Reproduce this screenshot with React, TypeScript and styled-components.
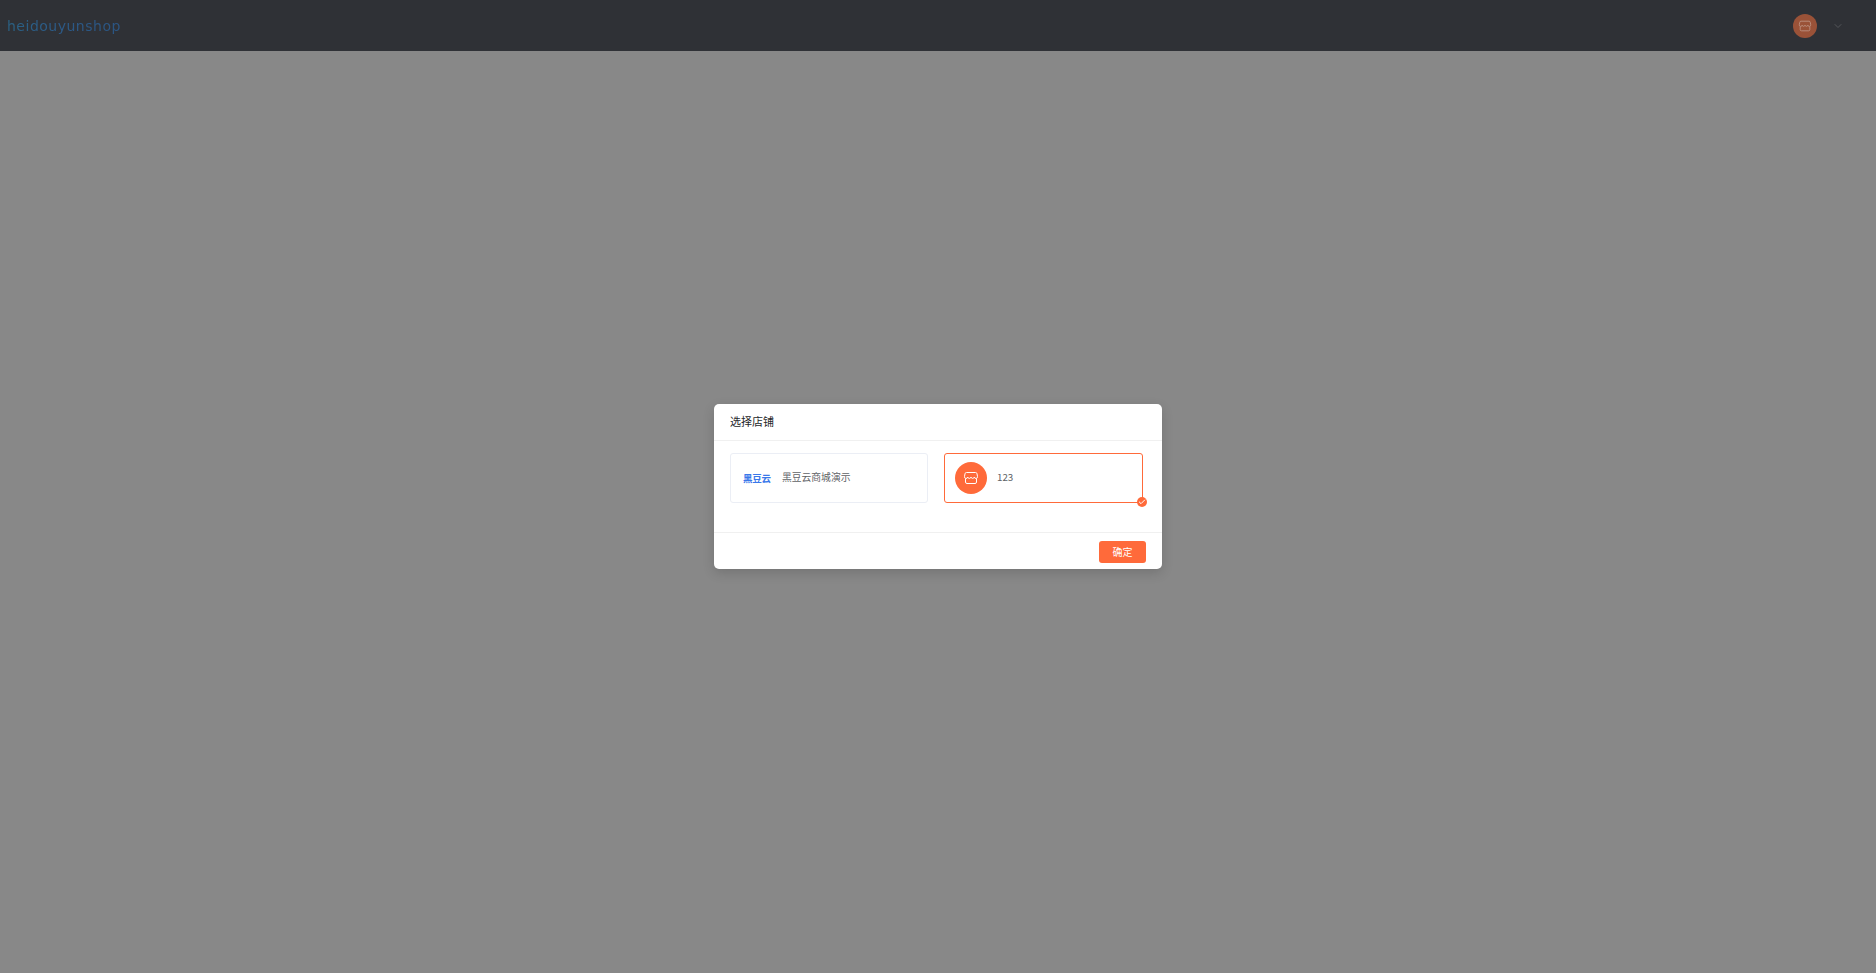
import React from 'react';
import styled, { createGlobalStyle } from 'styled-components';
import { Check, ChevronDown } from 'lucide-react';

const FONT = `"Noto Sans CJK SC", "Liberation Sans", sans-serif`;
const ORANGE = '#ff6a3a';

const GlobalStyle = createGlobalStyle`
  html, body {
    margin: 0;
    height: 100%;
    overflow: hidden;
    background: #888888;
    font-family: ${FONT};
  }
  #root {
    height: 100%;
  }
`;

const Page = styled.div`
  display: flex;
  flex-direction: column;
  height: 100%;
`;

const TopBar = styled.header`
  display: flex;
  align-items: center;
  justify-content: space-between;
  height: 51px;
  flex-shrink: 0;
  padding: 0 32px 0 7px;
  background: #2f3136;
`;

const Logo = styled.div`
  font-family: "DejaVu Sans", sans-serif;
  font-size: 14px;
  letter-spacing: 0.5px;
  line-height: 16px;
  background: linear-gradient(90deg, #2a6285 0%, #2c5a88 45%, #2b5583 100%);
  -webkit-background-clip: text;
  background-clip: text;
  color: transparent;
`;

const UserArea = styled.div`
  display: flex;
  align-items: center;
  gap: 15px;
`;

const Avatar = styled.div`
  display: flex;
  align-items: center;
  justify-content: center;
  width: 24px;
  height: 24px;
  border-radius: 50%;
  background: #9a5238;
  color: #bd9484;
`;

const Arrow = styled(ChevronDown)`
  color: #54565a;
`;

const Mask = styled.div`
  flex: 1;
  display: flex;
  align-items: flex-start;
  justify-content: center;
  padding-top: 353px;
  background: #888888;
`;

const Dialog = styled.section`
  width: 448px;
  height: 165px;
  display: flex;
  flex-direction: column;
  border-radius: 5px;
  background: #fff;
  box-shadow: 0 4px 12px rgba(0, 0, 0, 0.15);
`;

const DialogHeader = styled.div`
  height: 36px;
  box-sizing: content-box;
  display: flex;
  align-items: center;
  padding: 0 16px;
  border-bottom: 1px solid #f0f0f0;
  font-size: 11px;
  line-height: 14px;
  color: #26282b;
`;

const HeaderTitle = styled.span`
  margin-bottom: 3px;
`;

const DialogBody = styled.div`
  flex: 1;
  display: grid;
  grid-template-columns: 198px 199px;
  column-gap: 16px;
  align-content: start;
  padding: 12px 16px 0;
`;

const ShopCard = styled.div<{ $active?: boolean }>`
  position: relative;
  height: 50px;
  box-sizing: border-box;
  display: flex;
  align-items: center;
  gap: ${(p) => (p.$active ? '10px' : '11px')};
  padding-left: ${(p) => (p.$active ? '10px' : '12px')};
  border: 1px solid ${(p) => (p.$active ? ORANGE : '#ebeef5')};
  border-radius: 3px;
`;

const ShopLogo = styled.span`
  font-size: 9.5px;
  font-weight: 700;
  letter-spacing: -0.2px;
  color: #3a78ea;
  margin-bottom: 1px;
`;

const ShopIcon = styled.div`
  display: flex;
  align-items: center;
  justify-content: center;
  width: 32px;
  height: 32px;
  border-radius: 50%;
  background: ${ORANGE};
  color: #fff;
`;

const ShopName = styled.span`
  font-size: 9.8px;
  color: #606266;
  margin-bottom: 2px;
`;

const CheckBadge = styled.span`
  position: absolute;
  right: -5px;
  bottom: -5px;
  width: 10px;
  height: 10px;
  display: flex;
  align-items: center;
  justify-content: center;
  border-radius: 50%;
  background: ${ORANGE};
  color: #fff;
`;

const DialogFooter = styled.div`
  height: 35px;
  display: flex;
  align-items: center;
  justify-content: flex-end;
  padding: 1px 16px 0;
  border-top: 1px solid #f0f0f0;
`;

const ConfirmButton = styled.button`
  width: 47px;
  height: 22px;
  padding: 0;
  border: none;
  border-radius: 3px;
  background: ${ORANGE};
  color: #fff;
  font-family: ${FONT};
  font-size: 10px;
`;

function StoreIcon({ size }: { size: number }) {
  return (
    <svg width={size} height={size} viewBox="0 0 16 16" fill="none" stroke="currentColor" strokeWidth="1">
      <path d="M3.5 2.5h9a1.5 1.5 0 0 1 1.5 1.3l.5 2.7a1.6 1.6 0 0 1-3.2.6 1.7 1.7 0 0 1-3.3 0 1.7 1.7 0 0 1-3.3 0 1.6 1.6 0 0 1-3.2-.6L2 3.8a1.5 1.5 0 0 1 1.5-1.3z" />
      <path d="M2.5 8.5v3.5a1.5 1.5 0 0 0 1.5 1.5h8a1.5 1.5 0 0 0 1.5-1.5V8.5" />
    </svg>
  );
}

export default function App() {
  return (
    <>
      <GlobalStyle />
      <Page>
        <TopBar>
          <Logo>heidouyunshop</Logo>
          <UserArea>
            <Avatar>
              <StoreIcon size={14} />
            </Avatar>
            <Arrow size={12} />
          </UserArea>
        </TopBar>
        <Mask>
          <Dialog>
            <DialogHeader>
              <HeaderTitle>选择店铺</HeaderTitle>
            </DialogHeader>
            <DialogBody>
              <ShopCard>
                <ShopLogo>黑豆云</ShopLogo>
                <ShopName>黑豆云商城演示</ShopName>
              </ShopCard>
              <ShopCard $active>
                <ShopIcon>
                  <StoreIcon size={16} />
                </ShopIcon>
                <ShopName>123</ShopName>
                <CheckBadge>
                  <Check size={8} strokeWidth={3} />
                </CheckBadge>
              </ShopCard>
            </DialogBody>
            <DialogFooter>
              <ConfirmButton>确定</ConfirmButton>
            </DialogFooter>
          </Dialog>
        </Mask>
      </Page>
    </>
  );
}
